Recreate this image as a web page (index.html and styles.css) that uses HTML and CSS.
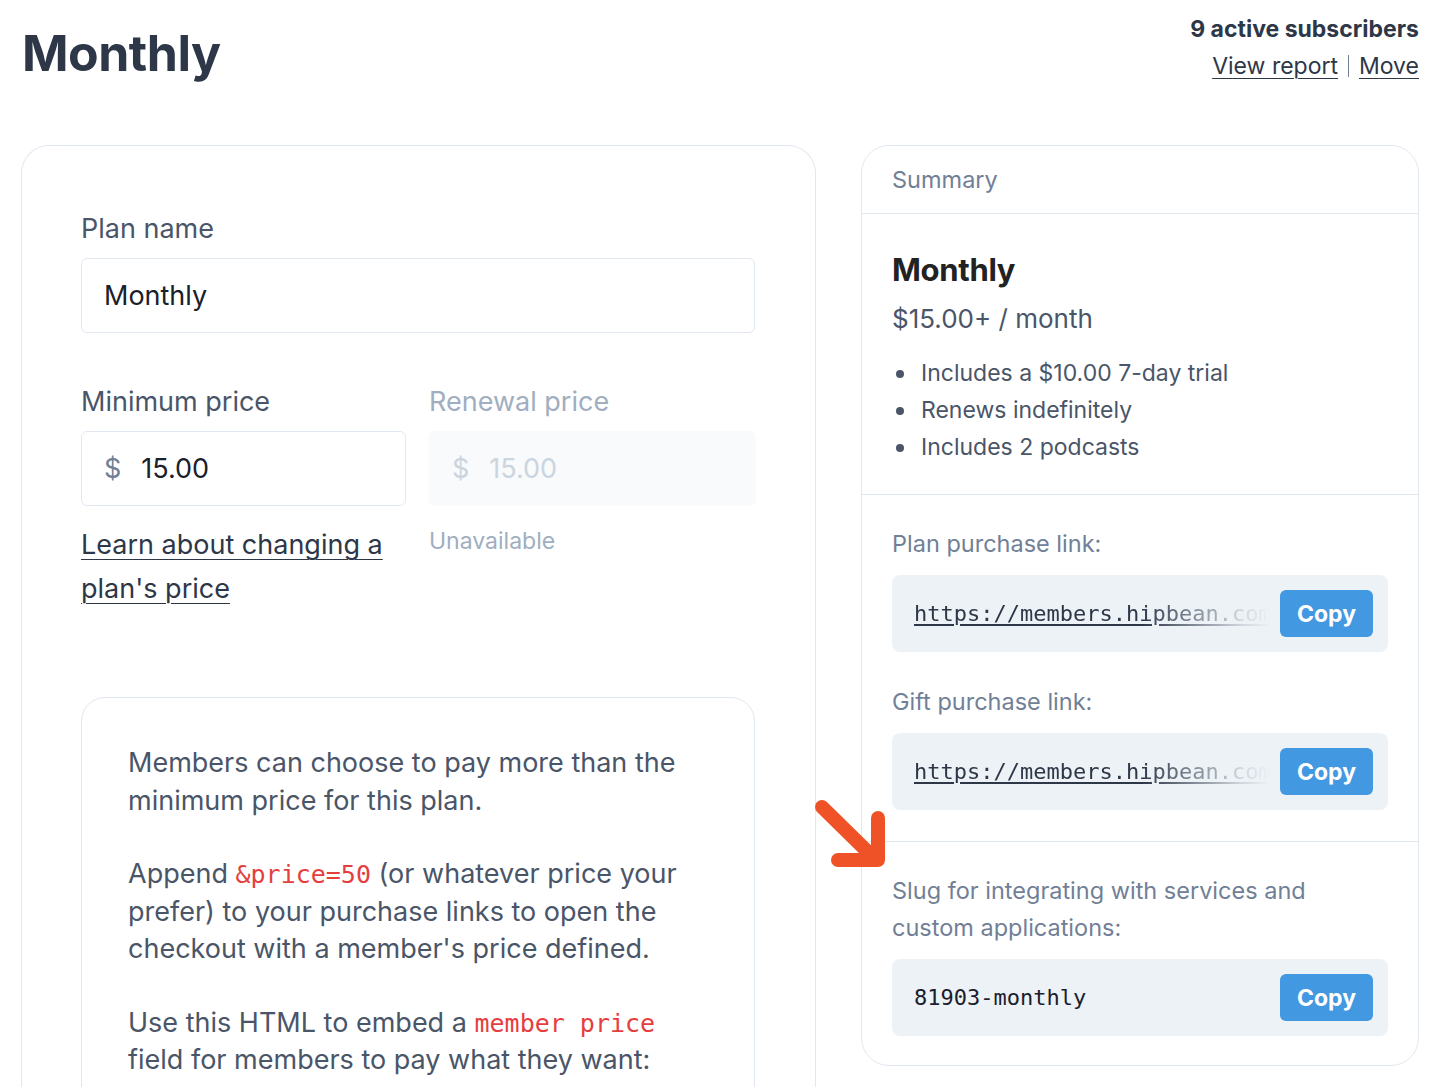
FILE: index.html
```html
<!DOCTYPE html>
<html>
<head>
    <title>Monthly plan</title>
    <link rel="stylesheet" href="styles.css">
</head>
<body>
    <div class="page-head">
        <h1>Monthly</h1>
        <div class="subs">
            <div class="subs-count">9 active subscribers</div>
            <div class="subs-links">
                <a href="#">View report</a><span class="sep"></span><a href="#">Move</a>
            </div>
        </div>
    </div>

    <div class="layout">
        <div class="card plan-form">
            <label class="label">Plan name</label>
            <div class="input">Monthly</div>

            <div class="price-row">
                <div class="price-col">
                    <label class="label">Minimum price</label>
                    <div class="input"><span class="currency">$</span>15.00</div>
                    <a class="learn" href="#">Learn about changing a plan's price</a>
                </div>
                <div class="price-col">
                    <label class="label muted">Renewal price</label>
                    <div class="input disabled"><span class="currency">$</span>15.00</div>
                    <div class="unavailable">Unavailable</div>
                </div>
            </div>

            <div class="note">
                <p>Members can choose to pay more than the minimum price for this plan.</p>
                <p>Append <code>&amp;price=50</code> <span>(or whatever price your</span> prefer) to your purchase links to open the checkout with a member's price defined.</p>
                <p>Use this HTML to embed a <code>member price</code> field for members to pay what they want:</p>
            </div>
        </div>

        <div class="card summary">
            <div class="summary-head">Summary</div>
            <div class="summary-section plan-info">
                <div class="plan-title">Monthly</div>
                <div class="plan-price">$15.00+ / month</div>
                <ul class="plan-facts">
                    <li>Includes a $10.00 7-day trial</li>
                    <li>Renews indefinitely</li>
                    <li>Includes 2 podcasts</li>
                </ul>
            </div>
            <div class="summary-section">
                <div class="field-title">Plan purchase link:</div>
                <div class="copy-box">
                    <a class="copy-text link" href="#">https://members.hipbean.com</a>
                    <button class="copy-btn">Copy</button>
                </div>
                <div class="field-title spaced">Gift purchase link:</div>
                <div class="copy-box">
                    <a class="copy-text link" href="#">https://members.hipbean.com</a>
                    <button class="copy-btn">Copy</button>
                </div>
            </div>
            <div class="summary-section last">
                <div class="field-title">Slug for integrating with services and custom applications:</div>
                <div class="copy-box">
                    <span class="copy-text">81903-monthly</span>
                    <button class="copy-btn">Copy</button>
                </div>
            </div>
        </div>

        <svg class="arrow" width="80" height="80" viewBox="0 0 80 80">
            <path d="M12 12 L63 62 M68 23 L68 65 L28 65" fill="none" stroke="#f05228" stroke-width="14" stroke-linecap="round" stroke-linejoin="round"/>
        </svg>
    </div>
</body>
</html>
```

FILE: styles.css
```css
body {
    font-family: Inter, Lato, sans-serif;
    margin: 0;
    padding: 0 21px;
    color: #4a5568;
    background: #fff;
}
.page-head {
    display: flex;
    justify-content: space-between;
    align-items: flex-start;
    height: 145px;
}
h1 {
    margin: 23px 0 0 1px;
    font-size: 50px;
    font-weight: 700;
    letter-spacing: -0.5px;
    color: #2d3748;
    line-height: 60px;
}
.subs {
    text-align: right;
    margin-top: 12px;
    font-size: 23px;
}
.subs-count {
    font-weight: 700;
    color: #2d3748;
    line-height: 34px;
}
.subs-links {
    line-height: 40px;
}
.subs-links a {
    color: #2d3748;
    text-decoration: underline;
    text-underline-offset: 4px;
    text-decoration-thickness: 1px;
}
.sep {
    display: inline-block;
    width: 1px;
    height: 22px;
    background: #718096;
    margin: 0 10px;
    vertical-align: -3px;
}

.layout {
    display: grid;
    grid-template-columns: 795px 558px;
    gap: 45px;
    align-items: start;
    position: relative;
}
.card {
    border: 1px solid #e2e8f0;
    border-radius: 28px;
    background: #fff;
}

/* left form */
.plan-form {
    padding: 67px 60px 0 59px;
    height: 1000px;
    border-bottom: none;
    border-bottom-left-radius: 0;
    border-bottom-right-radius: 0;
}
.label {
    display: block;
    font-size: 27px;
    line-height: 32px;
    margin-bottom: 13px;
    color: #4a5568;
}
.label.muted {
    color: #a0aec0;
}
.input {
    height: 75px;
    box-sizing: border-box;
    border: 1px solid #e2e8f0;
    border-radius: 6px;
    padding: 0 22px;
    display: flex;
    align-items: center;
    font-size: 27px;
    color: #1a202c;
    background: #fff;
}
.input.disabled {
    border-color: transparent;
    background: #f8fafc;
    color: #cbd5e0;
}
.currency {
    color: #718096;
    margin-right: 20px;
}
.input.disabled .currency {
    color: #cbd5e0;
}
.price-row {
    display: grid;
    grid-template-columns: 325px 327px;
    gap: 23px;
    margin-top: 53px;
}
.learn {
    display: block;
    margin-top: 17px;
    font-size: 27px;
    line-height: 44px;
    color: #2d3748;
    text-decoration: underline;
    text-underline-offset: 5px;
    text-decoration-thickness: 1px;
}
.unavailable {
    margin-top: 20px;
    font-size: 23px;
    line-height: 30px;
    color: #a0aec0;
}
.note {
    margin-top: 86px;
    border: 1px solid #e2e8f0;
    border-radius: 24px;
    padding: 46px 46px 40px;
    font-size: 27px;
    line-height: 37.5px;
    color: #4a5568;
}
.note p {
    margin: 0 0 36px;
}
code {
    font-family: "DejaVu Sans Mono", monospace;
    font-size: 25px;
    line-height: 1;
    color: #e53e3e;
}

/* right summary */
.summary-head {
    height: 67px;
    display: flex;
    align-items: center;
    padding: 0 30px;
    font-size: 23.5px;
    color: #718096;
    border-bottom: 1px solid #e2e8f0;
}
.summary-section {
    padding: 30px 30px 31px;
    border-bottom: 1px solid #e2e8f0;
}
.summary-section.plan-info {
    padding-top: 36px;
    padding-bottom: 28px;
}
.summary-section.last {
    border-bottom: none;
    padding-bottom: 29px;
}
.plan-title {
    font-size: 31px;
    font-weight: 700;
    letter-spacing: -0.3px;
    line-height: 40px;
    color: #222;
}
.plan-price {
    margin-top: 9px;
    font-size: 26px;
    line-height: 40px;
    color: #4a5568;
}
.plan-facts {
    list-style: none;
    margin: 16px 0 0;
    padding: 0;
    font-size: 23px;
    line-height: 37px;
    color: #4a5568;
}
.plan-facts li {
    display: flex;
    align-items: center;
    gap: 17px;
}
.plan-facts li::before {
    content: "";
    width: 8px;
    height: 8px;
    margin-left: 4px;
    border-radius: 50%;
    background: #4a5568;
}
.field-title {
    font-size: 23.5px;
    line-height: 37px;
    color: #718096;
    margin-bottom: 13px;
}
.field-title.spaced {
    margin-top: 31px;
}
.copy-box {
    height: 77px;
    display: flex;
    align-items: center;
    gap: 10px;
    padding: 0 15px 0 22px;
    background: #edf2f7;
    border-radius: 8px;
}
.copy-text {
    flex: 1;
    overflow: hidden;
    white-space: nowrap;
    font-family: "DejaVu Sans Mono", monospace;
    font-size: 22px;
    color: #1a202c;
}
.copy-text.link {
    color: #2d3748;
    text-decoration: underline;
    text-underline-offset: 3px;
    -webkit-mask-image: linear-gradient(to right, #000 64%, rgba(0, 0, 0, 0.15) 92%, transparent 100%);
    mask-image: linear-gradient(to right, #000 64%, rgba(0, 0, 0, 0.15) 92%, transparent 100%);
}
.copy-btn {
    width: 93px;
    height: 47px;
    border: none;
    border-radius: 6px;
    background: #4299e1;
    color: #fff;
    font-family: Inter, Lato, sans-serif;
    font-weight: 700;
    font-size: 23px;
}

.arrow {
    position: absolute;
    left: 789px;
    top: 650px;
}
```
